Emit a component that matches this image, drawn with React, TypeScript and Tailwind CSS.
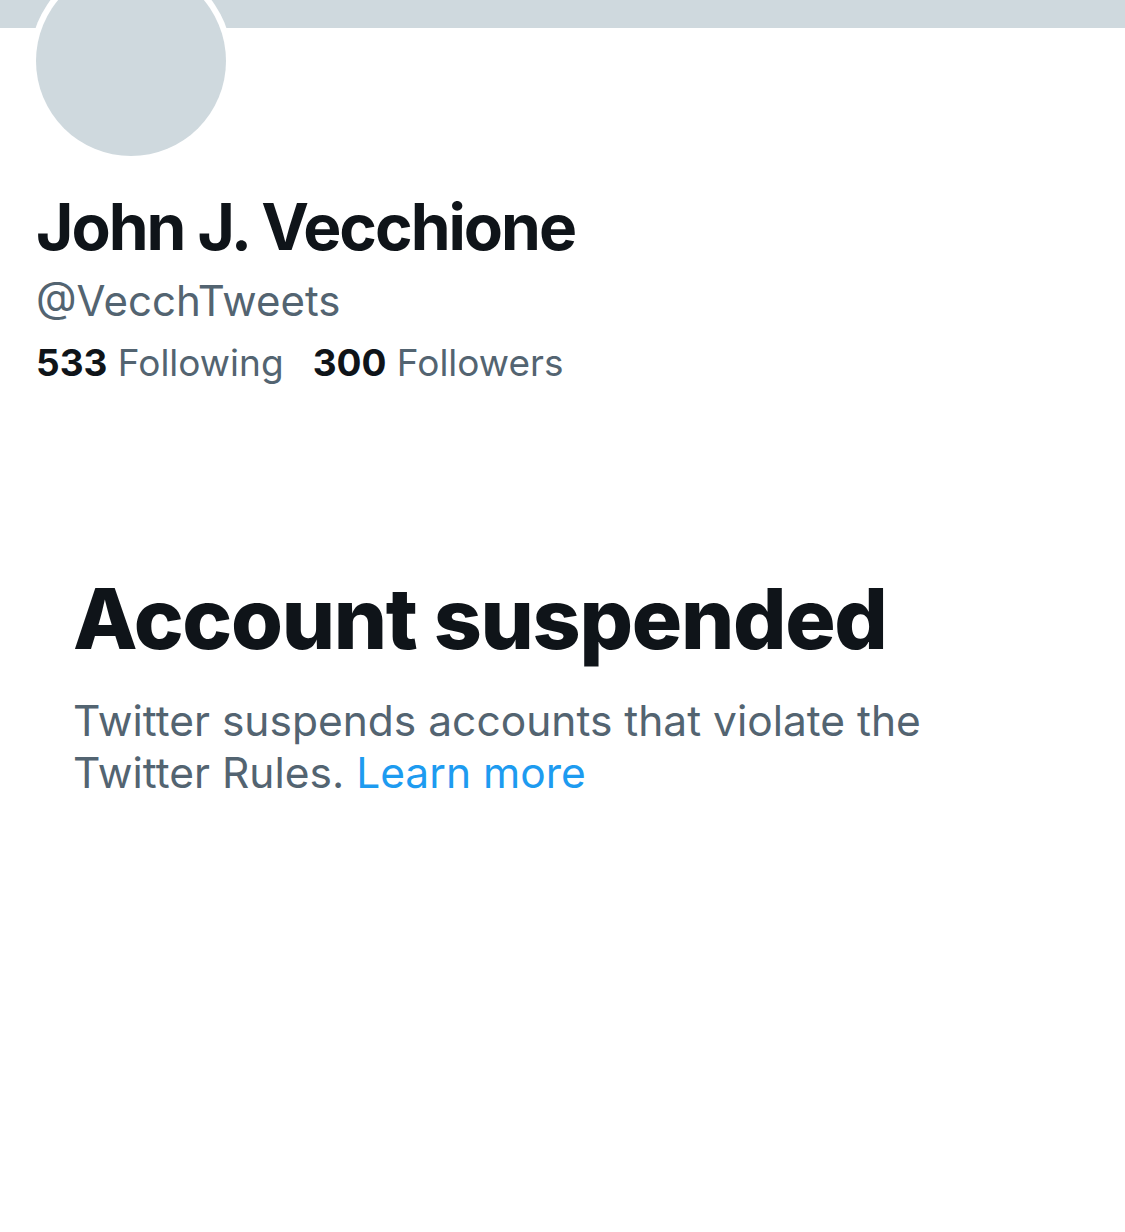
export default function App() {
    return (
        <div className="w-[1125px] h-[1232px] bg-white overflow-hidden font-['Inter',sans-serif]">
            <div className="h-[28px] bg-[#cfd9de]" />
            <div className="px-[30px] -mt-[68px]">
                <div className="w-[202px] h-[202px] rounded-full bg-white p-[6px]">
                    <div className="w-full h-full rounded-full bg-[#cfd9de]" />
                </div>
            </div>
            <div className="px-[36px] mt-[29px]">
                <h1 className="text-[64px] leading-[72px] font-bold text-[#0f1419] tracking-[-2px]">
                    John J. Vecchione
                </h1>
                <div className="mt-[13px] text-[42px] leading-[50px] text-[#536471]">@VecchTweets</div>
                <div className="mt-[14px] flex gap-[29px] text-[37px] leading-[46px]">
                    <span>
                        <span className="font-bold text-[#0f1419]">533</span>
                        <span className="text-[#536471]"> Following</span>
                    </span>
                    <span>
                        <span className="font-bold text-[#0f1419]">300</span>
                        <span className="text-[#536471]"> Followers</span>
                    </span>
                </div>
            </div>
            <div className="px-[73px] mt-[185px]">
                <h2 className="text-[84px] leading-[96px] font-extrabold text-[#0f1419] tracking-[-1.3px]">
                    Account suspended
                </h2>
                <p className="mt-[28px] text-[42.5px] leading-[52px] text-[#536471] w-[900px]">
                    Twitter suspends accounts that violate the Twitter Rules.{" "}
                    <span className="text-[#1d9bf0]">Learn more</span>
                </p>
            </div>
        </div>
    )
}
